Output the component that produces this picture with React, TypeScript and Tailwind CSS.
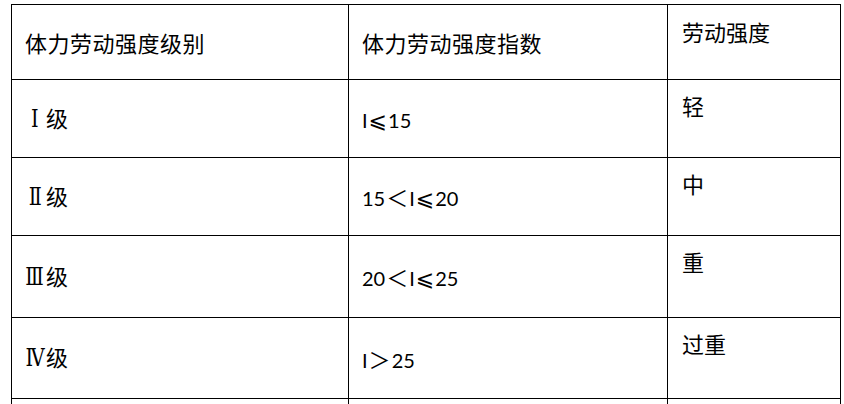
import React from "react";

const cjk = { fontFamily: '"Noto Sans CJK SC", sans-serif' };

function Num({ parts }: { parts: { t: string; k: "d" | "s" }[] }) {
  return (
    <span className="inline-flex items-baseline">
      {parts.map((p, i) =>
        p.k === "d" ? (
          <span key={i} className="text-[20px]" style={{ fontFamily: '"Lato", "Liberation Sans", sans-serif' }}>
            {p.t}
          </span>
        ) : (
          <span key={i} className="text-[22px] px-[1px]" style={{ fontFamily: '"Noto Sans CJK SC", "DejaVu Sans", sans-serif' }}>
            {p.t}
          </span>
        )
      )}
    </span>
  );
}

function Level({ n }: { n: string }) {
  return (
    <span className="inline-flex items-baseline">
      <span
        className="inline-flex w-[22px] justify-center text-[24px] font-normal"
        style={{ fontFamily: '"DejaVu Serif", "Liberation Serif", "Noto Sans CJK SC", serif' }}
      >
        <span className="inline-block scale-x-[0.8]">{n}</span>
      </span>
      <span className="text-[22px]" style={cjk}>
        级
      </span>
    </span>
  );
}

const rows: { h: string; lvl: string; num: { t: string; k: "d" | "s" }[]; deg: string }[] = [
  { h: "h-[78px]", lvl: "Ⅰ", num: [{ t: "I", k: "d" }, { t: "⩽", k: "s" }, { t: "15", k: "d" }], deg: "轻" },
  { h: "h-[78px]", lvl: "Ⅱ", num: [{ t: "15", k: "d" }, { t: "＜", k: "s" }, { t: "I", k: "d" }, { t: "⩽", k: "s" }, { t: "20", k: "d" }], deg: "中" },
  { h: "h-[82px]", lvl: "Ⅲ", num: [{ t: "20", k: "d" }, { t: "＜", k: "s" }, { t: "I", k: "d" }, { t: "⩽", k: "s" }, { t: "25", k: "d" }], deg: "重" },
  { h: "h-[81px]", lvl: "Ⅳ", num: [{ t: "I", k: "d" }, { t: "＞", k: "s" }, { t: "25", k: "d" }], deg: "过重" },
];

export default function App() {
  const cell = "border-r border-b border-black";
  return (
    <div className="w-[844px] h-[404px] overflow-hidden bg-white text-black">
      <div className="ml-[11px] mt-[4px] w-[830px] border-l border-t border-black grid grid-cols-[337px_319px_173px]">
        <div className={`${cell} h-[75px] flex items-center pl-[13px] text-[22px] leading-none tracking-[0.5px]`} style={cjk}>
          体力劳动强度级别
        </div>
        <div className={`${cell} h-[75px] flex items-center pl-[13px] text-[22px] leading-none tracking-[0.5px]`} style={cjk}>
          体力劳动强度指数
        </div>
        <div className={`${cell} h-[75px] pl-[14px] pt-[15px] text-[22px] leading-[22px]`} style={cjk}>
          劳动强度
        </div>
        {rows.map((r, i) => (
          <React.Fragment key={i}>
            <div className={`${cell} ${r.h} flex items-center pl-[12px]`}>
              <Level n={r.lvl} />
            </div>
            <div className={`${cell} ${r.h} flex items-center pl-[13px]`}>
              <Num parts={r.num} />
            </div>
            <div className={`${cell} ${r.h} pl-[14px] pt-[14px] text-[22px] leading-[22px]`} style={cjk}>
              {r.deg}
            </div>
          </React.Fragment>
        ))}
        <div className={`${cell} h-[60px]`} />
        <div className={`${cell} h-[60px]`} />
        <div className={`${cell} h-[60px]`} />
      </div>
    </div>
  );
}
